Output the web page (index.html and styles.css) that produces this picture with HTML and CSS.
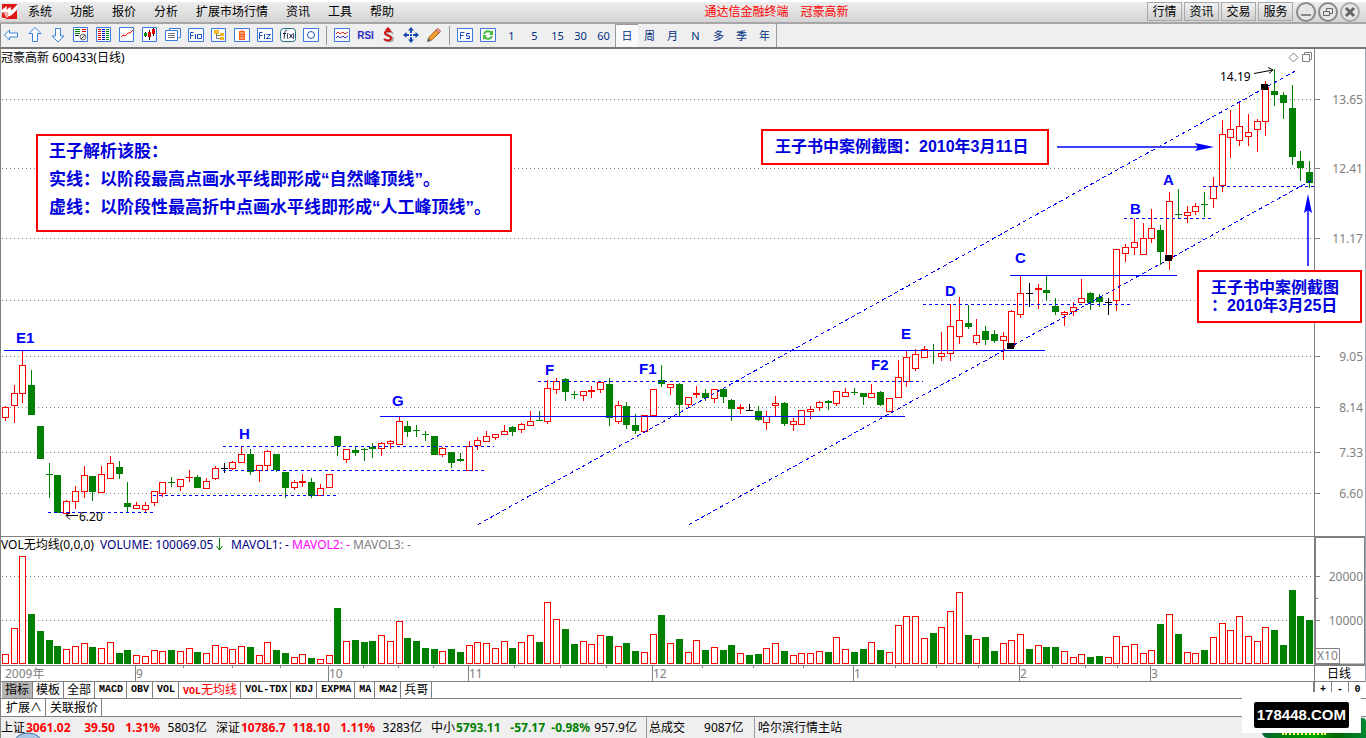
FILE: index.html
```
<!DOCTYPE html>
<html lang="zh-CN">
<head>
<meta charset="utf-8">
<title>通达信金融终端</title>
<link rel="stylesheet" href="styles.css">
</head>
<body>
<header class="menubar">
  <svg class="logo" viewBox="0 0 16 16" aria-hidden="true"><path fill="#e01818" d="M0 0h16v16H0z"/><path fill="#fff" d="M0 6l5-4 0 4 4-3 1 4 6-6v5l-6 6-3 1-4 3H0z"/><path fill="#e01818" d="M0 9l4 0 3 2-3 4H0z"/><path fill="#f6b0b0" d="M2 10l4-2 1 3-3 3z"/></svg>
  <nav class="menu">
    <button>系统</button><button>功能</button><button>报价</button><button>分析</button><button>扩展市场行情</button><button>资讯</button><button>工具</button><button>帮助</button>
  </nav>
  <h1 class="apptitle"><span>通达信金融终端</span><span>冠豪高新</span></h1>
  <div class="quick"><button>行情</button><button>资讯</button><button>交易</button><button>服务</button></div>
  <div class="winctl">
    <button aria-label="最小化"><svg viewBox="0 0 20 20"><circle cx="10" cy="10" r="9"/><path d="M5 13h10"/></svg></button>
    <button aria-label="还原"><svg viewBox="0 0 20 20"><circle cx="10" cy="10" r="9"/><path class="fine" d="M8.500 9V6.500h6v5h-3M5.500 9.500h6v4h-6z"/></svg></button>
    <button aria-label="关闭"><svg viewBox="0 0 20 20"><circle class="light" cx="10" cy="10" r="9"/><path class="cross" d="M6 6l8 8M14 6l-8 8"/></svg></button>
  </div>
</header>

<div class="toolbar">
  <button class="tool" aria-label="后退"><svg viewBox="0 0 16 16"><path class="arrow" d="M.500 8l5-5v3h8v4h-8v3z"/></svg></button>
  <button class="tool" aria-label="向上"><svg viewBox="0 0 16 16"><path class="arrow" d="M8 .500l6 6h-3.500v8h-5v-8H2z"/></svg></button>
  <button class="tool" aria-label="向下"><svg viewBox="0 0 16 16"><path class="arrow" d="M8 15l6-6h-3.500V1.500h-5V9H2z"/></svg></button>
  <button class="tool" aria-label="报表设置"><svg viewBox="0 0 16 16"><path class="box" d="M.500 .500h14v14H.500z"/><path stroke="#080" d="M2 2.500h5M2 4.500h5M2 6.500h5"/><path stroke="#d00" d="M9 2.500h4M9 4.500h4"/><path stroke="#222" d="M2 8.500h4"/><circle cx="10" cy="10" r="3" fill="#ddd" stroke="#777"/><path stroke="#666" d="M8 12l4-4"/></svg></button>
  <button class="tool" aria-label="行情列表"><svg viewBox="0 0 16 16"><path class="box" d="M.500 .500h14v14H.500z"/><path stroke="#d00" stroke-width="3" stroke-dasharray="1 1" d="M3.500 2v11"/><path stroke="#00c" stroke-width="3" stroke-dasharray="1 1" d="M7.500 2v11"/><path stroke="#080" stroke-width="3" stroke-dasharray="1 1" d="M11.500 2v11"/></svg></button>
  <button class="tool" aria-label="分时图"><svg viewBox="0 0 16 16"><path class="box" d="M.500 .500h14v14H.500z"/><path stroke="#d00" d="M2 10l2-2 2 1 3-3h2l3-3"/></svg></button>
  <button class="tool" aria-label="K线图"><svg viewBox="0 0 16 16"><path class="box" d="M.500 .500h14v14H.500z"/><path stroke="#000" d="M3.500 5v5M7.500 3v10M11.500 1v8"/><path fill="#080" d="M2 6h3v3H2z"/><path fill="#d00" d="M6 5h3v5H6zM10 2h3v5h-3z"/></svg></button>
  <button class="tool" aria-label="多窗口"><svg viewBox="0 0 16 16"><path class="box" d="M4.500 3.500v-2h11v9h-2M.500 3.500h12v10H.500z"/><path stroke="#777" d="M3 6.500h7M3 8.500h7M3 10.500h7"/></svg></button>
  <button class="tool" aria-label="F10"><svg viewBox="0 0 16 16"><path class="box" d="M.500 1.500h15v13H.500z"/><path class="ink" d="M2.500 12V5.500h3M2.500 8.500h3M7.500 7v5M9.500 7.500h4v4h-4z"/></svg></button>
  <button class="tool" aria-label="目录树"><svg viewBox="0 0 16 16"><path class="box" d="M.500 1.500h14v13H.500z"/><path fill="#ffcf40" stroke="#e8a800" d="M3.500 3.500h4v3h-4zM9.500 6.500h3v2h-3zM9.500 10.500h3v2h-3z"/><path stroke="#777" d="M5.500 7v4.500H9M6 8.500h3"/></svg></button>
  <button class="tool" aria-label="自选股"><svg viewBox="0 0 16 16"><path class="box" d="M.500 1.500h15v13H.500z"/><path fill="#ffa070" d="M5 4h6v9H5z"/><path stroke="#ff6020" d="M8 2.500v2M5.500 4.500h5v8h-5zM5.500 7.500h5M5.500 9.500h5"/></svg></button>
  <button class="tool" aria-label="F12"><svg viewBox="0 0 16 16"><path class="box" d="M.500 1.500h15v13H.500z"/><path class="ink" d="M2.500 12V5.500h3M2.500 8.500h3M7.500 7v5M9.500 7.500h4l-4 4h4"/></svg></button>
  <button class="tool" aria-label="公式"><svg viewBox="0 0 16 16"><rect class="box teal" x=".500" y="1.500" width="15" height="13" rx="3"/><path stroke="#124" d="M7 3.500c-2-1-2 1-3 8M3 6.500h3M8 6c-1 2-1 4 0 6M13 6c1 2 1 4 0 6M9.500 7l3 4M12.500 7l-3 4"/></svg></button>
  <button class="tool" aria-label="圆"><svg viewBox="0 0 16 16"><path class="box" d="M.500 1.500h15v13H.500z"/><circle cx="8" cy="8" r="3.500" class="ink"/></svg></button>
  <span class="sep"></span>
  <button class="tool" aria-label="叠加"><svg viewBox="0 0 16 16"><path class="box" d="M.500 1.500h15v13H.500z"/><path stroke="#d22" d="M2 7l2-2 2 2 3-2 2 2 3-2"/><path stroke="#33c" d="M2 11l2-2 2 2 3-2 2 2 3-2"/></svg></button>
  <button class="tool rsi">RSI</button>
  <button class="tool" aria-label="除权"><svg viewBox="0 0 16 16"><path stroke="#aaa" stroke-width="2" d="M13 7C11 3 7 4 7 7c0 2 6 2 6 5s-5 3-7 1"/><path stroke="#c11" stroke-width="2" d="M11 5C9 3 5 4 5 6c0 3 6 2 6 5s-5 3-7 1"/><path fill="#c11" d="M8 0l3 3H5z"/></svg></button>
  <button class="tool" aria-label="移动"><svg viewBox="0 0 16 16"><path fill="#1348b0" d="M8 0l3 3.500H9V7h3.500V5L16 8l-3.500 3V9H9v3.500h2L8 16l-3-3.500h2V9H3.500v2L0 8l3.500-3v2H7V3.500H5z"/><path stroke="#fff" d="M6.500 6.500h3v3h-3z"/></svg></button>
  <button class="tool" aria-label="画线"><svg viewBox="0 0 16 16"><path fill="#555" d="M1 15l1-4 3 3z"/><path fill="#f4a030" stroke="#a65d18" d="M2.500 11L10 3l3 3-8 7.500z"/><path fill="#f6a5a0" stroke="#b55" d="M10 3l2-1.500 2.500 2.500L13 6z"/></svg></button>
  <span class="sep"></span>
  <button class="tool" aria-label="F5"><svg viewBox="0 0 16 16"><path class="box" d="M.500 1.500h15v13H.500z"/><path class="ink" d="M3.500 12V5.500h4M3.500 8.500h3M13 6.500H9.500V9h3v2.500h-3.500"/></svg></button>
  <button class="tool" aria-label="刷新"><svg viewBox="0 0 16 16"><path class="box" d="M.500 1.500h15v13H.500z"/><path stroke="#49b83e" stroke-width="2" d="M4 7c1-3 5-4 8-1M12 9c-1 3-5 4-8 1"/><path fill="#49b83e" d="M13 3v5H9zM3 13V8h4z"/></svg></button>
  <button class="tool">1</button><button class="tool">5</button><button class="tool">15</button><button class="tool">30</button><button class="tool">60</button><button class="tool on">日</button><button class="tool">周</button><button class="tool">月</button><button class="tool">N</button><button class="tool">多</button><button class="tool">季</button><button class="tool">年</button>
  <span class="endline"></span>
</div>

<main>
<svg class="chart" viewBox="0 49 1366 633" role="img" aria-label="冠豪高新 600433 日线图">
  <g id="grid"></g>
  <g id="candles"></g>
  <g id="volume"></g>
  <g class="trend">
    <path d="M4 350.500H1045M380 416.500H905M1010 275.500H1177"/>
    <path class="dash" d="M48 512.500H154M153 495.500H337M223 446.500H494M223 470.500H484M538 381.500H923M923 304.500H1130M1124 218.500H1211M1203 186.500H1314"/>
    <path class="slope" d="M478 524.500L1298 69.500M689 524.500L1313 179.500"/>
  </g>
  <path d="M1007 343h7v6h-7zM1165 255h7v6h-7zM1261 84h7v6h-7z"/>
  <g class="point">
    <text x="16" y="343">E1</text><text x="239" y="439">H</text><text x="392" y="406">G</text><text x="545" y="375">F</text><text x="639" y="374">F1</text><text x="871" y="370">F2</text><text x="901" y="339">E</text><text x="945" y="296">D</text><text x="1015" y="263">C</text><text x="1130" y="214">B</text><text x="1163" y="185">A</text>
  </g>
  <g class="thin"><path d="M1254 73.500L1273 70M1268 67.500l5 2.500-4 3.500M66 515.500H78M70 512.500l-4 3 4 4"/></g>
  <g class="label black"><text x="1220" y="81">14.19</text><text x="79" y="521">6.20</text><text x="1" y="62">冠豪高新 600433(日线)</text><text x="1" y="549">VOL无均线(0,0,0)</text></g>
  <g class="label">
    <text class="navy" x="100" y="549">VOLUME: 100069.05</text><text class="navy" x="231" y="549">MAVOL1: -</text><text class="pink" x="292" y="549">MAVOL2: -</text><text class="gray" x="353" y="549">MAVOL3: -</text>
  </g>
  <path class="down" d="M219.500 538v12M216.500 546l3 4 3-4"/>
  <g class="axis">
    <path d="M0 536.500H1366M0 665.500H1366M.500 49V682M1314.500 49V682M0 681.500H1366"/>
    <path class="thick" d="M1315 537H1365V664.500H1315z"/>
    <path id="ticks"/>
    <path d="M1314.500 648.500h25v15h-25z"/>
  </g>
  <g class="label gray"><g id="scale"></g>
    <text x="1317" y="660">X10</text><text x="5" y="678">2009年</text><text x="136" y="678">9</text><text x="329" y="678">10</text><text x="469" y="678">11</text><text x="653" y="678">12</text><text x="854" y="678">1</text><text x="1020" y="678">2</text><text x="1151" y="678">3</text>
  </g>
  <text class="label black" x="1327" y="678">日线</text>
  <g class="axis"><path d="M1293.500 53l4.500 4.500-4.500 4.500-4.500-4.500zM1302.500 54.500h7v7h-7zM1304.500 54v-1.500h7v7h-2"/><path class="edge" d="M1365.500 49V682"/></g>
  <g class="shaft"><path d="M1057 147H1200M1308 266V208"/><path class="head" d="M1214 147l-19-4 3 4-3 4zM1308 194l-4 19 4-3 4 3z"/></g>
  <g class="note">
    <rect x="37" y="135" width="474" height="96"/><rect x="762" y="130" width="286" height="34"/><rect x="1198" y="271" width="163" height="51"/>
    <g class="large"><text x="49" y="157">王子解析该股：</text><text x="49" y="185">实线：以阶段最高点画水平线即形成“自然峰顶线”。</text><text x="49" y="213">虚线：以阶段性最高折中点画水平线即形成“人工峰顶线”。</text></g>
    <text x="775" y="152">王子书中案例截图：2010年3月11日</text>
    <text x="1211" y="293">王子书中案例截图</text><text x="1211" y="311">：2010年3月25日</text>
  </g>
</svg>

<div class="tabs">
  <button class="on cjk">指标</button><button class="cjk">模板</button><button class="cjk">全部</button><button>MACD</button><button>OBV</button><button>VOL</button><button class="hot">VOL<span>无均线</span></button><button>VOL-TDX</button><button>KDJ</button><button>EXPMA</button><button>MA</button><button>MA2</button><button class="cjk">兵哥</button>
  <div class="zoomers"><button>+</button><button>-</button><button>0</button></div>
</div>
<div class="tabs second"><button>扩展∧</button><button>关联报价</button></div>
</main>

<footer class="status">
  <div class="index up"><span>上证</span><b>3061.02</b><b>39.50</b><b>1.31%</b><span>5803亿</span></div>
  <div class="index up"><span>深证</span><b>10786.7</b><b>118.10</b><b>1.11%</b><span>3283亿</span></div>
  <div class="index fall"><span>中小</span><b>5793.11</b><b>-57.17</b><b>-0.98%</b><span>957.9亿</span></div>
  <div class="turnover"><span>总成交</span><span>9087亿</span></div>
  <div class="host">哈尔滨行情主站</div>
  <svg class="orb" viewBox="0 0 28 6" aria-hidden="true"><ellipse cx="14" cy="11" rx="14" ry="10" fill="#a9c9e4" stroke="#456f9c"/></svg>
  <div class="pill"><i></i></div>
</footer>
<div class="mark"><span>178448.COM</span></div>
<script src="chart.js"></script>
</body>
</html>
```

FILE: chart.js
```
// One row per trading day: colour, high, low, body top, body bottom, volume top.
// Colours: r = rising, g = falling, k = unchanged.
const rows = `
r 406 420 407 417 654|r 385 422 393 405 628|r 351 402 365 393 556|g 370 414 385 414 614|g 426 458 426 458 631
g 463 497 474 474 640|g 475 512 475 512 646|r 500 513 501 513 649|r 486 508 491 501 646|r 466 497 475 491 643
g 476 500 476 491 647|r 466 492 474 492 648|r 456 478 463 478 642|g 461 478 467 473 653|g 482 512 503 506 650
r 502 508 505 508 655|r 502 512 505 509 656|r 491 505 491 502 650|r 482 496 482 493 651|g 477 486 482 482 650
r 479 490 479 486 651|r 470 481 477 477 648|g 475 487 477 487 652|r 478 488 481 488 653|r 466 479 468 478 645
k 463 472 468 468 647|r 461 469 462 468 649|r 446 462 454 462 646|g 449 474 454 471 647|r 465 481 465 470 655
r 450 470 451 465 642|g 454 471 454 469 650|g 472 497 472 487 653|r 480 489 482 487 657|r 474 486 481 482 654
g 478 497 482 495 658|r 484 495 488 495 659|r 474 487 474 487 655|g 436 455 436 445 608|r 449 462 449 459 641
g 447 455 450 452 640|g 448 460 449 449 642|g 443 457 447 448 641|r 442 455 443 448 635|r 440 448 441 443 641
r 417 444 421 444 621|g 421 436 426 431 638|g 425 436 430 430 641|g 431 440 434 434 648|g 436 454 436 454 649
r 447 456 448 454 651|g 452 467 452 462 649|g 453 461 459 460 652|r 441 470 446 470 645|r 437 449 440 445 642
r 431 441 436 441 643|r 434 439 434 437 648|r 425 434 431 434 641|g 426 435 427 431 648|r 423 432 424 429 642
r 411 425 421 425 635|g 411 420 420 420 642|r 380 423 388 421 602|r 378 393 381 389 619|g 378 400 379 391 629
g 391 398 394 394 644|r 391 400 391 395 641|r 386 397 390 391 644|r 381 392 382 389 635|g 378 425 384 417 636
r 401 423 405 421 646|g 402 428 406 424 643|g 414 433 425 430 651|r 415 431 415 431 652|r 389 415 389 415 634
g 365 386 380 383 615|r 384 394 384 387 643|g 383 415 384 404 639|r 397 407 397 404 652|r 386 397 393 394 640
g 389 400 393 397 650|r 389 402 389 398 647|g 388 402 389 396 650|g 399 420 400 408 645|r 404 413 407 408 653
k 404 410 410 410 655|g 406 420 411 419 654|r 411 429 416 422 648|r 396 415 403 405 643|g 402 425 403 423 651
r 418 430 421 424 655|r 410 424 410 424 653|r 406 418 409 411 653|r 401 410 402 407 651|g 400 409 401 402 652
r 391 405 391 403 637|r 388 396 392 396 649|g 388 394 392 392 652|g 393 404 393 396 649|r 384 397 393 397 642
g 391 405 392 404 650|r 398 411 398 411 652|r 360 397 377 397 625|r 350 386 357 381 616|r 349 370 354 368 616
r 346 357 349 357 638|g 344 363 350 350 633|r 332 360 353 356 627|r 304 360 326 353 611|r 297 343 320 336 592
g 305 328 323 326 635|r 319 344 335 342 639|g 326 344 331 339 637|g 330 342 334 340 651|r 332 359 336 340 643
r 310 346 311 346 640|r 276 317 293 314 634|k 283 306 293 293 649|r 284 308 288 289 645|g 276 300 290 292 647
g 298 314 306 311 647|r 311 325 312 314 651|r 302 315 307 311 657|r 279 302 298 302 654|g 292 309 293 302 657
g 294 306 297 301 656|k 298 314 302 302 657|r 249 310 249 300 636|r 244 261 247 253 646|r 219 254 242 247 644
r 223 254 238 254 653|r 209 242 228 238 650|g 225 264 230 251 624|r 192 269 201 258 614|g 189 218 214 214 634
r 206 222 212 215 652|r 203 214 206 211 653|g 192 216 204 204 650|r 177 207 186 198 637|r 120 191 134 185 623
r 110 157 129 137 630|r 101 145 126 140 616|r 114 145 132 136 636|r 119 151 121 129 641|r 81 135 87 121 627
g 69 105 91 94 630|g 92 118 95 102 645|g 85 164 108 156 590|g 151 180 161 167 616|g 161 187 172 182 620
`.trim().split(/[|\n]/).map(s => s.split(" "));

const NS = "http://www.w3.org/2000/svg";
const INK = { r: "#ff0000", g: "#008000", k: "#000000" };
const byId = id => document.getElementById(id);

function add(parent, tag, attrs, text) {
  const el = document.createElementNS(NS, tag);
  for (const k in attrs) el.setAttribute(k, attrs[k]);
  if (text) el.textContent = text;
  parent.appendChild(el);
}

function bar(parent, cx, top, bottom, color, hollow) {
  if (hollow) {
    add(parent, "rect", { x: cx - 2.5, y: top + 0.5, width: 6, height: bottom - top, fill: "#fff", stroke: color });
  } else {
    add(parent, "rect", { x: cx - 3, y: top, width: 7, height: bottom - top + 1, fill: color });
  }
}

rows.forEach((row, i) => {
  const cx = Math.round(4.76 + 8.7537 * i);
  const [hi, lo, top, bottom, vol] = row.slice(1).map(Number);
  const color = INK[row[0]];
  add(byId("candles"), "rect", { x: cx, y: hi, width: 1, height: lo - hi + 1, fill: color });
  bar(byId("candles"), cx, top, bottom, color, row[0] === "r" && bottom - top > 1);
  const rising = row[0] === "r" || i === 25 || i === 126;
  bar(byId("volume"), cx, vol, 663, rising ? INK.r : INK.g, rising);
});

const prices = [[99, "13.65"], [168, "12.41"], [238, "11.17"], [300, ""], [356, "9.05"], [407, "8.14"], [452, "7.33"], [493, "6.60"]];
const volumes = [[576, "20000"], [620, "10000"]];
let ticks = "M1315 598.5h3";
for (const [y, text] of prices.concat(volumes)) {
  add(byId("grid"), "path", { d: `M2 ${y + 0.5}H1314` });
  ticks += `M1315 ${y + 0.5}h5`;
  if (text) add(byId("scale"), "text", { x: 1363, y: y + 5, "text-anchor": "end" }, text);
}
for (const x of [135, 328, 468, 652, 853, 1019, 1150]) ticks += `M${x + 0.5} 666v15`;
for (const x of [183, 232, 280, 363, 398, 433, 514, 560, 606, 702, 753, 803, 895, 936, 978, 1052, 1085, 1117]) ticks += `M${x + 0.5} 666v2`;
byId("ticks").setAttribute("d", ticks);
```

FILE: styles.css
```
* { box-sizing: border-box; }
body {
  margin: 0;
  min-height: 100vh;
  position: relative;
  overflow: hidden;
  background: #fff;
  color: #000;
  font: 12px/16px "Noto Sans", "Noto Sans CJK SC", sans-serif;
}
button {
  margin: 0;
  padding: 0;
  border: 0;
  background: none;
  color: inherit;
  font: inherit;
  white-space: nowrap;
}
svg { display: block; }

.menubar {
  height: 24px;
  display: flex;
  align-items: center;
  padding: 0 6px 1px 2px;
  border-top: 2px solid #fff;
  border-bottom: 2px solid #a6a6a6;
  background: linear-gradient(#ededed, #d4d4d4);
}
.logo { width: 15px; height: 15px; }
.menu { display: flex; gap: 18px; margin-left: 11px; }
.apptitle {
  display: flex;
  gap: 12px;
  margin: 0 auto;
  padding-left: 12px;
  color: #f00;
  font: inherit;
}
.quick { display: flex; gap: 2px; }
.quick button {
  width: 35px;
  height: 19px;
  border: 1px solid #a8a8a8;
  background: linear-gradient(#f2f2f2, #cfcfcf);
  line-height: 17px;
}
.winctl { display: flex; gap: 2px; margin-left: 3px; }
.winctl svg { width: 20px; height: 20px; fill: #e6e6e6; stroke: #888; stroke-width: 2; }
.winctl path { fill: none; }
.winctl .fine { stroke-width: 1; stroke: #666; }
.winctl .light { stroke: #aaa; }
.winctl .cross { stroke: #666; stroke-width: 3; }

.toolbar {
  height: 25px;
  display: flex;
  align-items: center;
  background: #efefef;
  border-bottom: 2px solid #777;
  border-left: 1px solid #888;
  color: #003080;
}
.tool {
  width: 23px;
  height: 23px;
  display: flex;
  align-items: center;
  justify-content: center;
  font-size: 11px;
}
.tool svg { width: 16px; height: 16px; margin: 0 1px 1px 0; fill: none; }
.tool .arrow { fill: #fff; stroke: #3b82dc; }
.tool .box { fill: #fff; stroke: #3b78e0; }
.tool .teal { stroke: #176c80; }
.tool .ink { stroke: #1c50b8; fill: none; }
.rsi { color: #2a2ac4; font: bold 10px "Liberation Sans", sans-serif; }
.tool.on { background: #fafafa; border-top: 1px solid #999; border-left: 1px solid #999; }
.sep { width: 8px; height: 19px; background: linear-gradient(#999, #999) 3px 0 / 1px 100% no-repeat; }
.endline { width: 1px; align-self: stretch; background: #999; }

.chart { width: 100%; height: auto; }
#grid path { stroke: #808080; stroke-dasharray: 1 3; }
.trend path { fill: none; stroke: #00f; }
.trend .dash { stroke-dasharray: 3 3; }
.trend .slope { stroke-dasharray: 4 3; shape-rendering: crispEdges; }
.point { fill: #00f; font: bold 15px "Liberation Sans", sans-serif; }
.shaft { stroke: #4040ff; stroke-width: 2; fill: none; }
.shaft .head { fill: #00f; stroke: none; }
.thin { stroke: #000; fill: none; }
.down { stroke: #008000; fill: none; stroke-width: 1; }
.label { font-size: 12px; }
.black { fill: #000; }
.navy { fill: #000080; }
.pink { fill: #f0f; }
.gray { fill: #808080; }
.note { fill: #00d; font: bold 16px "Liberation Sans", "Noto Sans CJK SC", sans-serif; }
.note .large { font-size: 17px; }
.note rect { fill: #fff; stroke: #f00; stroke-width: 2; }
.axis path { fill: none; stroke: #808080; }
.axis .thick { stroke-width: 2; }
.axis .edge { stroke: #a0a8b0; }

.tabs {
  height: 17px;
  display: flex;
  padding-left: 1px;
  border-left: 1px solid #808080;
  border-bottom: 1px solid #808080;
  font: bold 10px/16px "Liberation Mono", "Noto Sans CJK SC", monospace;
}
.tabs button { padding: 0 3px 0 4px; border-right: 1px solid #808080; }
.tabs .cjk { padding: 0 3px; }
.tabs .cjk, .tabs span, .second button { font: 12px/16px "Noto Sans", "Noto Sans CJK SC", sans-serif; }
.tabs .on { background: #b4b4b4; }
.tabs .hot { color: #f00; }
.second { height: 18px; }
.zoomers { display: flex; margin-left: auto; border-left: 2px solid #808080; }
.zoomers button { width: 17px; padding: 0; }
.zoomers button:last-child { border-right: 0; }

.status {
  height: 21px;
  position: relative;
  display: flex;
  align-items: stretch;
  background: #efefef;
  border-left: 1px solid #888;
  line-height: 22px;
}
.index { display: grid; grid-template-columns: 25px 50px 39px 45px 47px; padding-right: 9px; white-space: nowrap; }
.index > :nth-child(n + 3) { text-align: right; }
.up b { color: #f00; }
.fall b { color: #008000; }
.turnover { width: 108px; display: flex; gap: 19px; padding-left: 2px; border-left: 1px solid #999; }
.host { padding-left: 3px; border-left: 1px solid #999; }
.orb { position: absolute; left: 13px; bottom: 0; width: 28px; height: 6px; }
.pill {
  position: absolute;
  right: 0;
  bottom: 0;
  width: 104px;
  height: 20px;
  border-radius: 4px 4px 0 6px;
  background: linear-gradient(90deg, #063, #080 30%, #0a0 50%, #060 70%, #083);
}
.pill i { position: absolute; left: 20px; bottom: 3px; width: 44px; border-top: 2px dotted #ff6; }
.mark {
  position: absolute;
  right: 5px;
  bottom: 5px;
  padding: 10px 12px 5px;
  background: #fff;
}
.mark span {
  display: block;
  padding: 0 3px;
  border-radius: 2px;
  background: #000;
  color: #fff;
  font: bold 15px/26px "Liberation Sans", sans-serif;
}
```
